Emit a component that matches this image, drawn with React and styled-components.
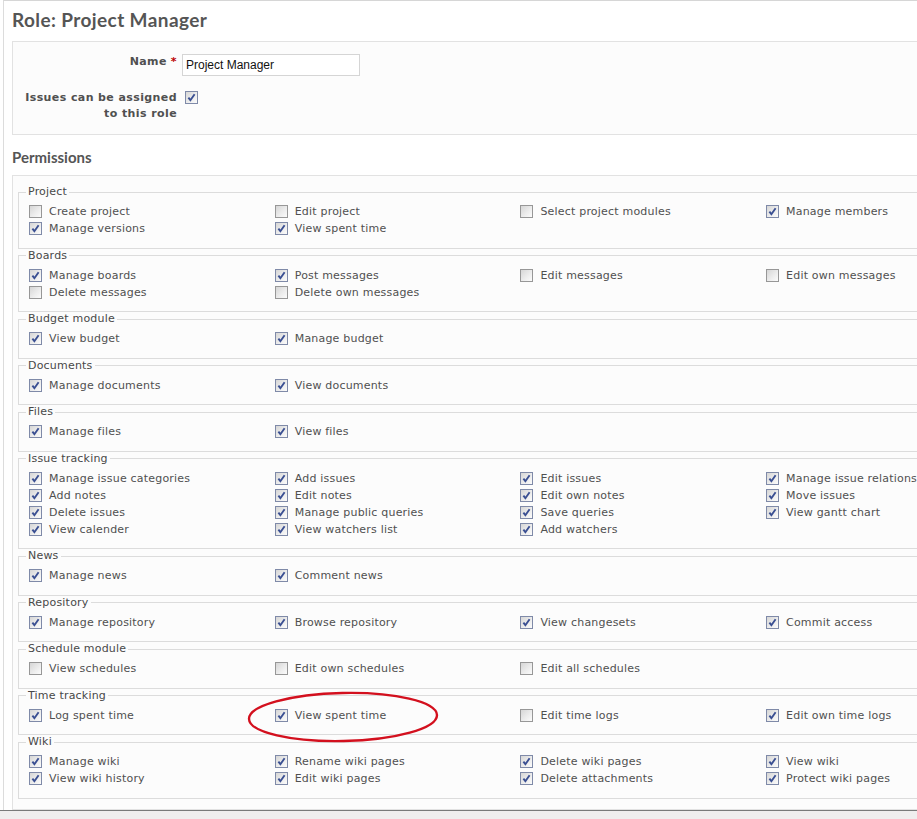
import styled, { createGlobalStyle } from "styled-components"

const GlobalStyle = createGlobalStyle`
    html, body {
        margin: 0;
        padding: 0;
        background: #ffffff;
        overflow: hidden;
    }
    body {
        font-family: "DejaVu Sans", Verdana, sans-serif;
        font-size: 11px;
        color: #505050;
    }
`

const Viewport = styled.div`
    display: flex;
    flex-direction: column;
    width: 917px;
    height: 819px;
    overflow: hidden;
`

const Main = styled.div`
    flex: 1;
    position: relative;
    overflow: hidden;
`

const Page = styled.div`
    width: 1100px;
    height: 100%;
    margin-left: 3px;
    border-left: 1px solid #dcdcdc;
    border-top: 1px solid #d6d6d6;
    padding: 8px 0 0 8px;
    box-sizing: border-box;
`

const Title = styled.h2`
    margin: 0;
    font-family: "Lato", "DejaVu Sans", sans-serif;
    font-weight: 700;
    font-size: 19px;
    letter-spacing: 0.4px;
    line-height: 22px;
    color: #555555;
`

const FormBox = styled.div`
    margin-top: 10px;
    background: #fcfcfc;
    border: 1px solid #e2e2e2;
    padding: 12px 0 12px 0;
    display: grid;
    grid-template-columns: 164px 1fr;
    column-gap: 5px;
    row-gap: 14px;
    align-items: start;
`

const FieldLabel = styled.div`
    text-align: right;
    font-weight: 700;
    letter-spacing: 0.4px;
    color: #505050;
    line-height: ${p => p.$lh || 16}px;
    padding-top: ${p => p.$pt || 0}px;
    white-space: nowrap;
`

const Required = styled.span`
    color: #bb0000;
    margin-left: 4px;
`

const TextInput = styled.input`
    width: 178px;
    height: 22px;
    box-sizing: border-box;
    border: 1px solid #d5d5d5;
    background: #ffffff;
    padding: 0 3px;
    font-family: "Liberation Sans", Arial, sans-serif;
    font-size: 12px;
    color: #111111;
    outline: none;
`

const Heading = styled.h3`
    margin: 13px 0 0 0;
    font-family: "Lato", "DejaVu Sans", sans-serif;
    font-weight: 700;
    font-size: 15px;
    line-height: 18px;
    color: #555555;
`

const PermBox = styled.div`
    margin-top: 9px;
    background: #fcfcfc;
    border: 1px solid #e2e2e2;
    padding: 9px 0 10px 5px;
`

const Group = styled.fieldset`
    margin: 0;
    padding: 4px 0 10.5px 7px;
    border: 1px solid #dcdcdc;
    border-right: none;
    min-width: 0;
`

const Legend = styled.legend`
    padding: 0 2px;
    font-size: 11px;
    letter-spacing: 0.2px;
    line-height: 14px;
    color: #484848;
`

const Grid = styled.div`
    display: grid;
    grid-template-columns: repeat(4, 245.7px);
`

const Item = styled.label`
    display: flex;
    align-items: center;
    height: 17px;
    white-space: nowrap;
    color: #505050;
    font-size: 11px;
    letter-spacing: 0.2px;
`

const Box = styled.span`
    display: inline-flex;
    align-items: center;
    justify-content: center;
    flex: none;
    width: 13px;
    height: 13px;
    box-sizing: border-box;
    margin: ${p => p.$flush ? "1px 0 0 3px" : "0 7px 0 3px"};
    border: 1px solid ${p => p.$on ? "#7f8aa8" : "#979797"};
    background: linear-gradient(135deg, #d6d6d6 0%, #ececec 55%, #fbfbfb 100%);
`

const Annotation = styled.svg`
    position: absolute;
    left: 247px;
    top: 690px;
    pointer-events: none;
`

const StatusBar = styled.div`
    flex: none;
    height: 8px;
    border-top: 1px solid #7a7a7a;
    background: #f0eeee;
`

function Check({ on, flush }) {
    return (
        <Box $on={on} $flush={flush}>
            {on && (
                <svg width="9" height="9" viewBox="0 0 9 9">
                    <path d="M1.4 4.6 L3.4 7.2 L7.6 1.3" fill="none" stroke="#3a4f92" strokeWidth="1.9" />
                </svg>
            )}
        </Box>
    )
}

const groups = [
    ["Project", [["Create project", 0], ["Edit project", 0], ["Select project modules", 0], ["Manage members", 1], ["Manage versions", 1], ["View spent time", 1]]],
    ["Boards", [["Manage boards", 1], ["Post messages", 1], ["Edit messages", 0], ["Edit own messages", 0], ["Delete messages", 0], ["Delete own messages", 0]]],
    ["Budget module", [["View budget", 1], ["Manage budget", 1]]],
    ["Documents", [["Manage documents", 1], ["View documents", 1]]],
    ["Files", [["Manage files", 1], ["View files", 1]]],
    ["Issue tracking", [
        ["Manage issue categories", 1], ["Add issues", 1], ["Edit issues", 1], ["Manage issue relations", 1],
        ["Add notes", 1], ["Edit notes", 1], ["Edit own notes", 1], ["Move issues", 1],
        ["Delete issues", 1], ["Manage public queries", 1], ["Save queries", 1], ["View gantt chart", 1],
        ["View calender", 1], ["View watchers list", 1], ["Add watchers", 1],
    ]],
    ["News", [["Manage news", 1], ["Comment news", 1]]],
    ["Repository", [["Manage repository", 1], ["Browse repository", 1], ["View changesets", 1], ["Commit access", 1]]],
    ["Schedule module", [["View schedules", 0], ["Edit own schedules", 0], ["Edit all schedules", 0]]],
    ["Time tracking", [["Log spent time", 1], ["View spent time", 1], ["Edit time logs", 0], ["Edit own time logs", 1]]],
    ["Wiki", [
        ["Manage wiki", 1], ["Rename wiki pages", 1], ["Delete wiki pages", 1], ["View wiki", 1],
        ["View wiki history", 1], ["Edit wiki pages", 1], ["Delete attachments", 1], ["Protect wiki pages", 1],
    ]],
]

export default function App() {
    return (
        <Viewport>
            <GlobalStyle />
            <Main>
                <Page>
                    <Title>Role: Project Manager</Title>
                    <FormBox>
                        <FieldLabel $lh={14} $pt={1}>Name<Required>*</Required></FieldLabel>
                        <TextInput defaultValue="Project Manager" />
                        <FieldLabel>Issues can be assigned<br />to this role</FieldLabel>
                        <Check on flush />
                    </FormBox>
                    <Heading>Permissions</Heading>
                    <PermBox>
                        {groups.map(([name, items]) => (
                            <Group key={name}>
                                <Legend>{name}</Legend>
                                <Grid>
                                    {items.map(([label, on]) => (
                                        <Item key={label}>
                                            <Check on={!!on} />
                                            {label}
                                        </Item>
                                    ))}
                                </Grid>
                            </Group>
                        ))}
                    </PermBox>
                </Page>
                <Annotation width="194" height="54" viewBox="0 0 194 54">
                    <ellipse cx="96" cy="27" rx="94" ry="24" fill="none" stroke="#d3101e" strokeWidth="2.4" transform="rotate(-1.2 96 27)" />
                </Annotation>
            </Main>
            <StatusBar />
        </Viewport>
    )
}
